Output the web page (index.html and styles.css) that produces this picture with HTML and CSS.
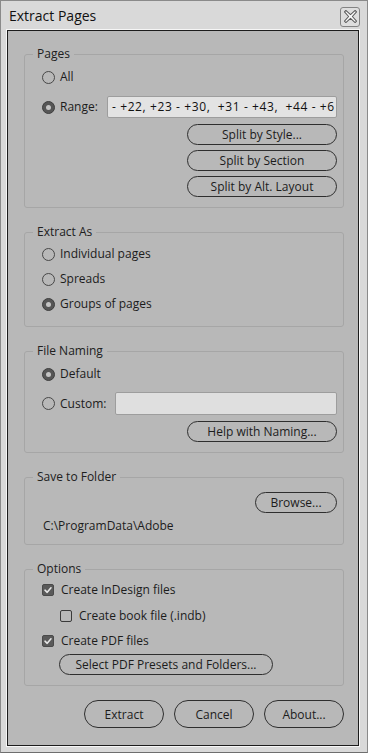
FILE: index.html
```html
<!DOCTYPE html>
<html>
<head>
<meta charset="utf-8">
<link rel="stylesheet" href="styles.css">
</head>
<body>
<div class="window">
  <div class="titlebar">
    <span class="title">Extract Pages</span>
    <span class="close">
      <svg width="13" height="13" viewBox="0 0 14 14"><polygon points="2,0.5 7,5 12,0.5 13.5,2 9,7 13.5,12 12,13.5 7,9 2,13.5 0.5,12 5,7 0.5,2" fill="#fafafa" stroke="#5a5a5a" stroke-width="1.1" stroke-linejoin="round"/></svg>
    </span>
  </div>
  <div class="panel">
    <fieldset class="group">
      <legend>Pages</legend>
      <div class="body pages-body">
        <div class="row"><span class="radio"></span><span>All</span></div>
        <div class="row field-row range-row"><span class="radio on"></span><span class="lbl lbl-range">Range:</span><span class="field"><span class="field-text">- +22, +23 - +30,  +31 - +43,  +44 - +6</span></span></div>
        <div class="btn-stack">
          <span class="pill">Split by Style...</span>
          <span class="pill">Split by Section</span>
          <span class="pill">Split by Alt. Layout</span>
        </div>
      </div>
    </fieldset>

    <fieldset class="group">
      <legend>Extract As</legend>
      <div class="body extract-body">
        <div class="row"><span class="radio"></span><span>Individual pages</span></div>
        <div class="row"><span class="radio"></span><span>Spreads</span></div>
        <div class="row"><span class="radio on"></span><span>Groups of pages</span></div>
      </div>
    </fieldset>

    <fieldset class="group">
      <legend>File Naming</legend>
      <div class="body naming-body">
        <div class="row"><span class="radio on"></span><span>Default</span></div>
        <div class="row field-row custom-row"><span class="radio"></span><span class="lbl lbl-custom">Custom:</span><span class="field custom-field"></span></div>
        <div class="btn-stack naming-btn"><span class="pill">Help with Naming...</span></div>
      </div>
    </fieldset>

    <fieldset class="group">
      <legend>Save to Folder</legend>
      <div class="body folder-body">
        <div class="btn-stack"><span class="pill browse">Browse...</span></div>
        <div class="path">C:\ProgramData\Adobe</div>
      </div>
    </fieldset>

    <fieldset class="group">
      <legend>Options</legend>
      <div class="body options-body">
        <div class="row"><span class="check on"><svg width="10" height="10" viewBox="0 0 10 10"><path d="M2 5.2 L4.2 7.3 L8 2.8" fill="none" stroke="#e6e6e6" stroke-width="1.6" stroke-linecap="round" stroke-linejoin="round"/></svg></span><span>Create InDesign files</span></div>
        <div class="row sub"><span class="check"></span><span>Create book file (.indb)</span></div>
        <div class="row"><span class="check on"><svg width="10" height="10" viewBox="0 0 10 10"><path d="M2 5.2 L4.2 7.3 L8 2.8" fill="none" stroke="#e6e6e6" stroke-width="1.6" stroke-linecap="round" stroke-linejoin="round"/></svg></span><span>Create PDF files</span></div>
        <span class="pill presets">Select PDF Presets and Folders...</span>
      </div>
    </fieldset>

    <div class="actions">
      <span class="pill big">Extract</span>
      <span class="pill big">Cancel</span>
      <span class="pill big">About...</span>
    </div>
  </div>
</div>
</body>
</html>
```

FILE: styles.css
```css
* { box-sizing: border-box; }
html, body { margin: 0; padding: 0; }
body {
  width: 368px;
  height: 753px;
  background: #d8d8d8;
  font-family: "Open Sans", "Noto Sans", sans-serif;
  font-size: 12px;
  color: #1c1c1c;
}
.window {
  width: 368px;
  height: 753px;
  border: 1px solid #8a8a8a;
  border-bottom-color: #6e6e6e;
  background: #d9d9d9;
  display: flex;
  flex-direction: column;
}
.titlebar {
  height: 29px;
  flex: none;
  display: flex;
  align-items: center;
  justify-content: space-between;
  padding: 0 7px 0 8px;
}
.title {
  font-size: 14px;
  color: #111;
}
.close {
  width: 20px;
  height: 20px;
  border: 1px solid #838383;
  border-radius: 3px;
  background: #dedede;
  display: flex;
  align-items: center;
  justify-content: center;
  margin-top: 2px;
}
.panel {
  flex: 1;
  margin: 0 8px 6px 6px;
  border: 1px solid #1c1c1c;
  box-shadow: 0 0 0 1px #f6f6f6;
  background: #b8b8b8;
  padding: 15px 14px 0 16px;
  display: flex;
  flex-direction: column;
}
.group {
  margin: 0 0 16px 0;
  padding: 0;
  min-width: 0;
  border: 1px solid #a6a6a6;
  border-radius: 3px;
}
.group legend {
  margin-left: 8px;
  padding: 0 4px;
  font-size: 12px;
  line-height: 16px;
  color: #202020;
}
.body {
  padding-left: 17px;
  padding-right: 6px;
  display: flex;
  flex-direction: column;
}
.row {
  display: flex;
  align-items: center;
  height: 20px;
  line-height: 20px;
  white-space: nowrap;
}
.radio {
  width: 13px;
  height: 13px;
  border-radius: 50%;
  border: 1px solid #474747;
  margin-right: 5px;
  flex: none;
  position: relative;
}
.radio.on {
  background: #565656;
  border-color: #3e3e3e;
}
.radio.on::after {
  content: "";
  position: absolute;
  left: 3px;
  top: 3px;
  width: 5px;
  height: 5px;
  border-radius: 50%;
  background: #c4c4c4;
}
.check {
  width: 12px;
  height: 12px;
  border: 1px solid #3a3a3a;
  border-radius: 2px;
  margin-right: 7px;
  flex: none;
  display: flex;
  align-items: center;
  justify-content: center;
}
.check.on {
  background: #5a5a5a;
  border-color: #4a4a4a;
}
.field-row { height: 22px; }
.lbl { flex: none; }
.lbl-range { width: 47px; }
.lbl-custom { width: 55px; }
.field {
  flex: 1;
  height: 22px;
  border: 1px solid #9d9d9d;
  border-radius: 2px;
  background: #e3e3e3;
  overflow: hidden;
  padding-left: 4px;
  line-height: 20px;
  color: #111;
  white-space: nowrap;
}
.field-text { white-space: pre; letter-spacing: 0.6px; }
.custom-field { height: 23px; background: #dfdfdf; }
.custom-row { height: 23px; }
.btn-stack {
  display: flex;
  flex-direction: column;
  align-items: flex-end;
  gap: 5px;
}
.pill {
  display: flex;
  align-items: center;
  justify-content: center;
  height: 21px;
  width: 150px;
  border: 1px solid #2e2e2e;
  border-radius: 11px;
  color: #1c1c1c;
  white-space: nowrap;
}
.pages-body { padding-top: 5px; padding-bottom: 10px; }
.pages-body .range-row { margin-top: 9px; }
.pages-body .btn-stack { margin-top: 6px; }
.extract-body { padding-top: 4px; padding-bottom: 12px; gap: 5px; }
.naming-body { padding-top: 5px; padding-bottom: 10px; }
.naming-body .custom-row { margin-top: 8px; }
.naming-btn { margin-top: 6px; }
.folder-body { padding-top: 7px; padding-bottom: 9px; }
.pill.browse { width: 82px; }
.path { margin-top: 4px; height: 18px; line-height: 18px; padding-left: 1px; }
.options-body { padding-top: 3px; padding-bottom: 10px; }
.options-body .row + .row { margin-top: 6px; }
.options-body .row.sub + .row { margin-top: 5px; }
.row.sub { padding-left: 18px; }
.pill.presets { width: 214px; margin-left: 17px; margin-top: 3px; }
.actions {
  margin-top: -2px;
  display: flex;
  justify-content: flex-end;
  gap: 10px;
}
.pill.big {
  width: 80px;
  height: 28px;
  border-radius: 14px;
}
```
